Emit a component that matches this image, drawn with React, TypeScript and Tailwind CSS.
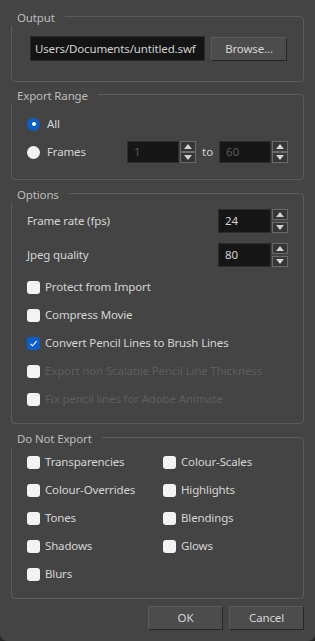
import type { ReactNode } from 'react';

const FONT = { fontFamily: '"Noto Sans", "Open Sans", sans-serif' };

function GroupBox({ title, className, children }: { title: string; className: string; children: ReactNode }) {
  return (
    <div className={`relative mx-[11px] rounded-[4px] border border-[#5c5c5c] ${className}`}>
      <span className="absolute -left-px -top-[7px] bg-[#444444] pl-[6px] pr-[10px] text-[11.5px] leading-[16px] tracking-[-0.15px] text-[#bcbcbc]">
        {title}
      </span>
      {children}
    </div>
  );
}

function Check({ label, checked = false, disabled = false }: { label: string; checked?: boolean; disabled?: boolean }) {
  return (
    <div className="flex h-[28px] items-center gap-[5px]">
      {checked ? (
        <span className="flex h-[13px] w-[13px] items-center justify-center rounded-[3px] bg-[#0d5ec6]">
          <svg width="9" height="9" viewBox="0 0 9 9">
            <path d="M1.5 4.8 L3.6 6.8 L7.6 2.2" fill="none" stroke="#ffffff" strokeWidth="1.1" />
          </svg>
        </span>
      ) : (
        <span className="h-[13px] w-[13px] rounded-[3px] bg-[#f3f3f3]" />
      )}
      <span className={`text-[11.5px] tracking-[-0.15px] ${disabled ? 'text-[#5e5e5e]' : 'text-[#d4d4d4]'}`}>{label}</span>
    </div>
  );
}

function Radio({ label, checked = false }: { label: string; checked?: boolean }) {
  return (
    <div className="flex w-[100px] items-center gap-[7px]">
      {checked ? (
        <span className="flex h-[13px] w-[13px] items-center justify-center rounded-full bg-[#0d5ec6]">
          <span className="h-[4px] w-[4px] rounded-full bg-white" />
        </span>
      ) : (
        <span className="h-[13px] w-[13px] rounded-full bg-[#f3f3f3]" />
      )}
      <span className="text-[11.5px] tracking-[-0.15px] text-[#d4d4d4]">{label}</span>
    </div>
  );
}

function Arrow({ up }: { up?: boolean }) {
  return (
    <span className="flex h-[11px] w-[16px] items-center justify-center border border-[#6a6a6a] bg-[#363636]">
      <svg width="8" height="5" viewBox="0 0 8 5">
        {up ? <path d="M0 5 L4 0 L8 5 Z" fill="#d2d2d2" /> : <path d="M0 0 L8 0 L4 5 Z" fill="#d2d2d2" />}
      </svg>
    </span>
  );
}

function Spin({ value, disabled = false, tall = false }: { value: string; disabled?: boolean; tall?: boolean }) {
  return (
    <div className={`flex ${tall ? 'h-[24px]' : 'h-[22px]'}`}>
      <div
        className={`flex ${tall ? 'w-[53px]' : 'w-[52px]'} items-center border border-[#2c2c2c] bg-[#161616] pl-[6px] text-[11.5px] ${
          disabled ? 'text-[#5a5a5a]' : 'text-[#d2d2d2]'
        }`}
      >
        {value}
      </div>
      <div className="ml-px flex flex-col justify-between">
        <Arrow up />
        <Arrow />
      </div>
    </div>
  );
}

function Button({ children, className }: { children: ReactNode; className: string }) {
  return (
    <button
      className={`flex h-[24px] items-center justify-center border border-[#5a5a5a] border-b-[#262626] border-r-[#262626] bg-[#4c4c4c] text-[11.5px] tracking-[-0.15px] text-[#d6d6d6] ${className}`}
    >
      {children}
    </button>
  );
}

export default function App() {
  return (
    <div className="h-[641px] w-[315px] bg-[#262626]" style={FONT}>
      <div className="flex h-[641px] w-[315px] flex-col overflow-hidden rounded-b-[7px] bg-[#444444]">
        {/* Output */}
        <GroupBox title="Output" className="mt-[16px] h-[66px]">
          <div className="flex gap-[6px] pl-[18px] pt-[19px]">
            <div className="flex h-[25px] w-[175px] items-center border border-[#2a2a2a] bg-[#141414] pl-[4px] text-[11.5px] tracking-[-0.15px] text-[#d0d0d0]">
              Users/Documents/untitled.swf
            </div>
            <Button className="mt-px w-[76px]">Browse...</Button>
          </div>
        </GroupBox>

        {/* Export Range */}
        <GroupBox title="Export Range" className="mt-[12px] h-[86px]">
          <div className="flex flex-col gap-[6px] pl-[15px] pt-[18px]">
            <div className="flex h-[22px] items-center">
              <Radio label="All" checked />
            </div>
            <div className="flex h-[22px] items-center">
              <Radio label="Frames" />
              <Spin value="1" disabled />
              <span className="mx-[6px] text-[11.5px] text-[#d4d4d4]">to</span>
              <Spin value="60" disabled />
            </div>
          </div>
        </GroupBox>

        {/* Options */}
        <GroupBox title="Options" className="mt-[13px] h-[231px]">
          <div className="flex flex-col px-[15px] pt-[15px]">
            <div className="flex h-[24px] items-center justify-between">
              <span className="text-[11.5px] tracking-[-0.15px] text-[#d4d4d4]">Frame rate (fps)</span>
              <Spin value="24" tall />
            </div>
            <div className="mt-[10px] flex h-[24px] items-center justify-between">
              <span className="text-[11.5px] tracking-[-0.15px] text-[#d4d4d4]">Jpeg quality</span>
              <Spin value="80" tall />
            </div>
            <div className="mt-[6px]">
              <Check label="Protect from Import" />
              <Check label="Compress Movie" />
              <Check label="Convert Pencil Lines to Brush Lines" checked />
              <Check label="Export non Scalable Pencil Line Thickness" disabled />
              <Check label="Fix pencil lines for Adobe Animate" disabled />
            </div>
          </div>
        </GroupBox>

        {/* Do Not Export */}
        <GroupBox title="Do Not Export" className="mt-[13px] h-[162px]">
          <div className="grid grid-cols-[136px_1fr] pl-[15px] pt-[10px]">
            <Check label="Transparencies" />
            <Check label="Colour-Scales" />
            <Check label="Colour-Overrides" />
            <Check label="Highlights" />
            <Check label="Tones" />
            <Check label="Blendings" />
            <Check label="Shadows" />
            <Check label="Glows" />
            <Check label="Blurs" />
          </div>
        </GroupBox>

        <div className="mr-[11px] mt-[7px] flex justify-end gap-[6px]">
          <Button className="w-[75px]">OK</Button>
          <Button className="w-[75px]">Cancel</Button>
        </div>
      </div>
    </div>
  );
}
